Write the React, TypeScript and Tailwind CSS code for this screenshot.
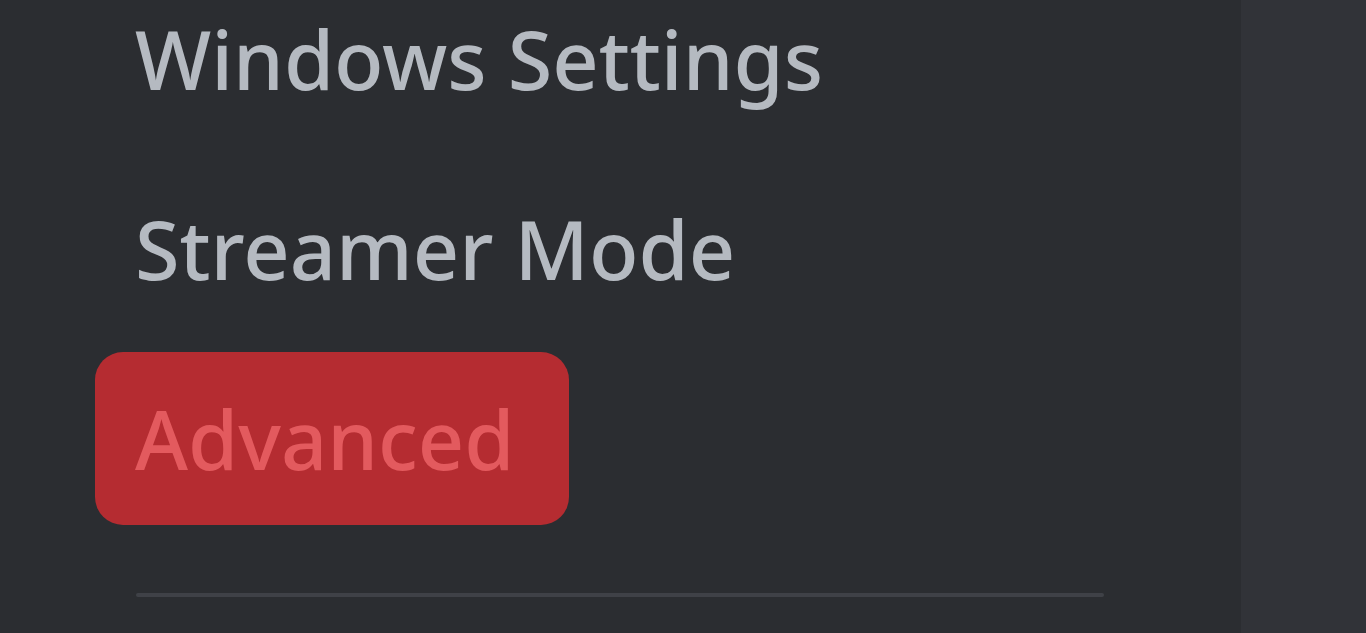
export default function App() {
  const items = ["Windows Settings", "Streamer Mode"];
  return (
    <div className="flex h-[633px] w-[1366px] overflow-hidden bg-[#313338]" style={{ fontFamily: '"Noto Sans", "Open Sans", sans-serif' }}>
      <div className="flex w-[1241px] shrink-0 flex-col bg-[#2b2d31] pl-[95px]">
        <div className="-mt-[28px] flex flex-col gap-[17px]">
          {items.map((t) => (
            <div key={t} className="flex h-[173px] items-center px-[40px] text-[81px] font-medium leading-none text-[#b5bac1]">
              {t}
            </div>
          ))}
          <div className="flex h-[173px] w-[474px] items-center rounded-[28px] bg-[#b52c31] px-[40px] text-[81px] font-medium leading-none text-[#e35a5e]">
            Advanced
          </div>
        </div>
        <div className="ml-[41px] mt-[68px] h-[4px] w-[968px] rounded-full bg-[#3f4147]" />
      </div>
      <div className="flex-1" />
    </div>
  );
}
